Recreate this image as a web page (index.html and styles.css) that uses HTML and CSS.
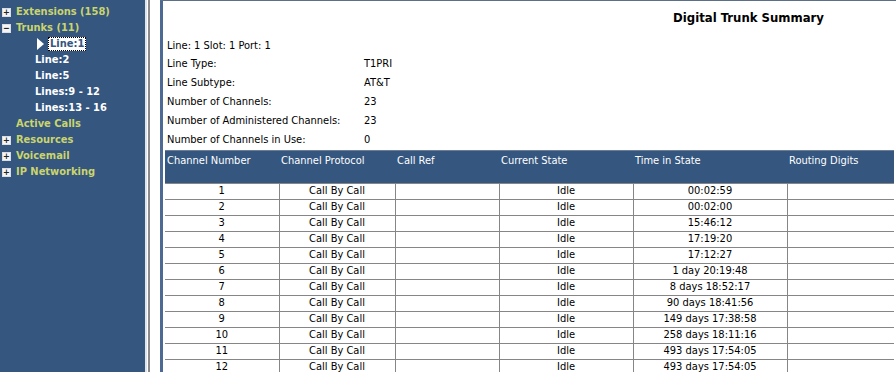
FILE: index.html
```html
<!DOCTYPE html>
<html lang="en">
<head>
  <meta charset="UTF-8">
  <title>Digital Trunk Summary</title>
  <link rel="stylesheet" href="styles.css">
</head>
<body>

<div class="nav">
  <ul class="tree">
    <li class="top"><span class="box">+</span>Extensions (158)</li>
    <li class="top"><span class="box">&minus;</span>Trunks (11)</li>
    <li class="sub current"><span class="arrow"></span><span class="focus">Line:1</span></li>
    <li class="sub">Line:2</li>
    <li class="sub">Line:5</li>
    <li class="sub">Lines:9 - 12</li>
    <li class="sub">Lines:13 - 16</li>
    <li class="top noBox">Active Calls</li>
    <li class="top"><span class="box">+</span>Resources</li>
    <li class="top"><span class="box">+</span>Voicemail</li>
    <li class="top"><span class="box">+</span>IP Networking</li>
  </ul>
</div>

<div class="split"></div>

<div class="main">
  <div class="tabs">
    <span class="tab t1"></span><span class="tab t2"></span><span class="tab t3"></span>
  </div>
  <div class="frame">
    <h1>Digital Trunk Summary</h1>
    <p class="lineInfo">Line: 1 Slot: 1 Port: 1</p>
    <table class="info">
      <tr><td>Line Type:</td><td>T1PRI</td></tr>
      <tr><td>Line Subtype:</td><td>AT&amp;T</td></tr>
      <tr><td>Number of Channels:</td><td>23</td></tr>
      <tr><td>Number of Administered Channels:</td><td>23</td></tr>
      <tr><td>Number of Channels in Use:</td><td>0</td></tr>
    </table>
    <table class="channels">
      <thead>
        <tr>
          <th class="c1">Channel Number</th>
          <th class="c2">Channel Protocol</th>
          <th class="c3">Call Ref</th>
          <th class="c4">Current State</th>
          <th class="c5">Time in State</th>
          <th class="c6">Routing Digits</th>
        </tr>
      </thead>
      <tbody id="rows"></tbody>
    </table>
  </div>
</div>

<script>
const times = ['00:02:59', '00:02:00', '15:46:12', '17:19:20', '17:12:27', '1 day 20:19:48',
  '8 days 18:52:17', '90 days 18:41:56', '149 days 17:38:58', '258 days 18:11:16',
  '493 days 17:54:05', '493 days 17:54:05'];

document.getElementById('rows').innerHTML = times.map((t, i) =>
  `<tr><td>${i + 1}</td><td>Call By Call</td><td></td><td>Idle</td><td>${t}</td><td></td></tr>`
).join('');
</script>
</body>
</html>
```

FILE: styles.css
```css
body {
  margin: 0;
  height: 372px;
  overflow: hidden;
  display: flex;
  background: white;
  font-family: "DejaVu Sans Condensed", "DejaVu Sans", sans-serif;
  font-size: 11px;
  color: #000;
}

.nav {
  width: 145px;
  flex: none;
  background: #34567f;
}
.tree {
  list-style: none;
  margin: 4px 0 0;
  padding: 0;
}
.tree li {
  height: 16px;
  line-height: 16px;
  font-family: "DejaVu Sans Condensed", "DejaVu Sans", sans-serif;
  font-weight: bold;
  font-size: 11px;
  white-space: nowrap;
  display: flex;
  align-items: center;
}
.top {
  color: #cbd46c;
  padding-left: 2px;
}
.top.noBox { padding-left: 16px; }
.box {
  width: 7px;
  height: 7px;
  border: 1px solid #d8dde6;
  background: #f4f4f4;
  color: #222;
  font-size: 9px;
  line-height: 7px;
  text-align: center;
  margin-right: 5px;
  font-weight: bold;
  overflow: hidden;
}
.sub {
  color: #fff;
  padding-left: 35px;
}
.current { padding-left: 37px; }
.arrow {
  width: 0;
  height: 0;
  border-top: 6px solid transparent;
  border-bottom: 6px solid transparent;
  border-left: 7px solid #fff;
  margin-right: 4px;
}
.focus {
  background: #fff;
  color: #34567f;
  border: 1px dotted #000;
  line-height: 12px;
  padding: 0 1px;
}

.split {
  width: 15px;
  flex: none;
  background: #fff;
  border-left: 2px solid #dfe4ec;
  box-sizing: border-box;
  position: relative;
}
.split::after {
  content: "";
  position: absolute;
  left: 1px;
  top: 0;
  bottom: 0;
  width: 2px;
  background: #8a8a8a;
}

.main {
  flex: 1;
  min-width: 0;
  overflow: hidden;
  display: flex;
  flex-direction: column;
}
.tabs {
  height: 4px;
  background: #3d5f8c;
  border-bottom: 1px solid #5c6f88;
  display: flex;
}
.tab { border-right: 1px solid #8aa0bc; }
.t1 { width: 52px; }
.t2 { width: 124px; }
.t3 { width: 51px; }

.frame {
  flex: 1;
  border-left: 3px solid #4c6a93;
  padding-left: 2px;
}
h1 {
  margin: 9px 0 0;
  font-size: 13px;
  font-family: "DejaVu Sans Condensed", "DejaVu Sans", sans-serif;
  font-weight: bold;
  text-align: right;
  padding-right: 72px;
  height: 27px;
}
.lineInfo {
  margin: 0 0 0 2px;
  height: 17px;
  line-height: 17px;
}
.info {
  border-collapse: collapse;
  margin-left: 2px;
}
.info td {
  padding: 0;
  height: 19px;
}
.info td:first-child { width: 197px; }

.channels {
  border-collapse: collapse;
  margin-top: 1px;
  table-layout: fixed;
  width: 729px;
}
.channels th {
  background: #34567f;
  color: #fff;
  font-weight: normal;
  text-align: left;
  vertical-align: top;
  height: 33px;
  padding: 3px 2px 0;
  box-sizing: border-box;
  border-top: 1px solid #6b7d95;
  white-space: nowrap;
  overflow: hidden;
}
.channels td {
  height: 16px;
  padding: 0;
  text-align: center;
  vertical-align: top;
  border: 1px solid #868686;
  box-sizing: border-box;
  line-height: 13px;
}
.channels td:first-child { border-left: none; }
.channels td:last-child { border-right: none; }
.c1 { width: 114px; }
.c2 { width: 116px; }
.c3 { width: 104px; }
.c4 { width: 134px; }
.c5 { width: 154px; }
.c6 { width: 107px; }
```
